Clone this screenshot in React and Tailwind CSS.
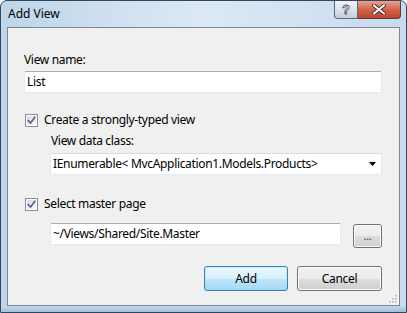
import React from "react";

const font = { fontFamily: '"Noto Sans", "Open Sans", sans-serif' };

function Checkbox() {
  return (
    <div className="w-[13px] h-[13px] border border-[#8e8f8f] bg-white p-[1px] shrink-0">
      <div className="w-full h-full bg-gradient-to-br from-[#dcdcdc] to-[#f8f8f8] flex items-center justify-center">
        <svg width="9" height="9" viewBox="0 0 9 9">
          <path d="M1.2 4.6 L3.5 7 L7.8 1.3" fill="none" stroke="#4c61a3" strokeWidth="1.6" strokeLinecap="square" />
        </svg>
      </div>
    </div>
  );
}

function TextBox({ className = "", children }) {
  return (
    <div
      className={
        "h-[22px] bg-white border border-[#e3e9ef] border-t-[#abadb3] rounded-[2px] flex items-center pl-[2px] text-[12px] text-black " +
        className
      }
    >
      {children}
    </div>
  );
}

export default function App() {
  return (
    <div className="w-[407px] h-[313px] bg-white" style={font}>
      <div className="w-[407px] h-[313px] rounded-t-[7px] border border-[#34475a] bg-gradient-to-r from-[#bed5ea] via-[#dce9f5] to-[#c6dbee] flex flex-col relative overflow-hidden">
        {/* title bar */}
        <div className="h-[26px] flex items-start shrink-0">
          <div className="pl-[7px] pt-[5px] text-[12px] leading-[16px] text-black">Add View</div>
          <div className="ml-auto mr-[5px] flex">
            <div className="w-[24px] h-[18px] border border-[#5a6878] border-t-0 rounded-bl-[4px] bg-gradient-to-b from-[#f0f4f8] via-[#dbe4ee] to-[#c2cfdc] flex items-center justify-center">
              <span className="text-[13px] font-bold leading-none text-white" style={{ WebkitTextStroke: "0.8px #4d5b6a", fontFamily: '"Liberation Sans", sans-serif' }}>?</span>
            </div>
            <div className="w-[43px] h-[18px] border border-[#5a3a35] border-t-0 border-l-0 rounded-br-[4px] bg-gradient-to-b from-[#e7a291] via-[#d0634c] to-[#c2442c] flex items-center justify-center">
              <svg width="14" height="11" viewBox="0 0 14 11">
                <path d="M2 1.5 L12 9.5 M12 1.5 L2 9.5" stroke="#3f1a14" strokeWidth="3.6" strokeLinecap="square" />
                <path d="M2 1.5 L12 9.5 M12 1.5 L2 9.5" stroke="#ffffff" strokeWidth="2" strokeLinecap="square" />
              </svg>
            </div>
          </div>
        </div>

        {/* client area */}
        <div className="ml-[6px] mr-[6px] h-[279px] border border-[#7b8794] bg-[#f0f0f0] flex flex-col pl-[16px] pr-[17px] relative text-[12px] leading-[16px] tracking-[-0.33px] text-black">
          <div className="mt-[24px]">View name:</div>
          <TextBox className="mt-[3px]">List</TextBox>

          <div className="mt-[19px] flex items-center gap-[6px] h-[16px] pl-[1px]">
            <Checkbox />
            <span>Create a strongly-typed view</span>
          </div>

          <div className="ml-[26px] flex flex-col">
            <div className="mt-[5px] pl-[1px]">View data class:</div>
            <div className="mt-[4px] h-[22px] bg-white border border-[#e3e9ef] border-t-[#d8dce1] rounded-[2px] flex items-center pl-[2px] pr-[5px]">
              <span>IEnumerable&lt; MvcApplication1.Models.Products&gt;</span>
              <svg className="ml-auto" width="7" height="4" viewBox="0 0 7 4">
                <path d="M0 0 H7 L3.5 4 Z" fill="#000" />
              </svg>
            </div>
          </div>

          <div className="mt-[21px] flex items-center gap-[6px] h-[16px] pl-[1px]">
            <Checkbox />
            <span>Select master page</span>
          </div>

          <div className="ml-[26px] mt-[11px] flex items-start gap-[12px]">
            <TextBox className="flex-1">~/Views/Shared/Site.Master</TextBox>
            <div className="mt-[1px] w-[29px] h-[24px] rounded-[3px] border border-[#707070] bg-[linear-gradient(to_bottom,#f2f2f2_0%,#ebebeb_50%,#dddddd_51%,#cfcfcf_100%)] shadow-[inset_0_0_0_1px_#fcfcfc] flex items-center justify-center">
              <span className="text-[11px] leading-none text-[#333] -mt-[1px]">...</span>
            </div>
          </div>

          <div className="mt-[18px] flex justify-end gap-[9px]">
            <div className="w-[84px] h-[25px] rounded-[3px] border border-[#3c7fb1] bg-[linear-gradient(to_bottom,#eaf6fd_0%,#d9f0fc_50%,#bee6fd_51%,#a7d9f5_100%)] shadow-[inset_0_0_0_1px_#48d7fb33] flex items-center justify-center">
              Add
            </div>
            <div className="w-[85px] h-[25px] rounded-[3px] border border-[#707070] bg-[linear-gradient(to_bottom,#f2f2f2_0%,#ebebeb_50%,#dddddd_51%,#cfcfcf_100%)] shadow-[inset_0_0_0_1px_#fcfcfc] flex items-center justify-center">
              Cancel
            </div>
          </div>

          {/* resize grip */}
          <svg className="absolute right-[2px] bottom-[2px]" width="9" height="9" viewBox="0 0 9 9">
            {[
              [7, 1],
              [4, 4],
              [7, 4],
              [1, 7],
              [4, 7],
              [7, 7],
            ].map(([x, y], i) => (
              <rect key={i} x={x} y={y} width="1.5" height="1.5" fill="#a8acb2" />
            ))}
          </svg>
        </div>
        <div className="flex-1 bg-gradient-to-b from-[#c6d9ea] to-[#9fbfdc]" />
      </div>
    </div>
  );
}
